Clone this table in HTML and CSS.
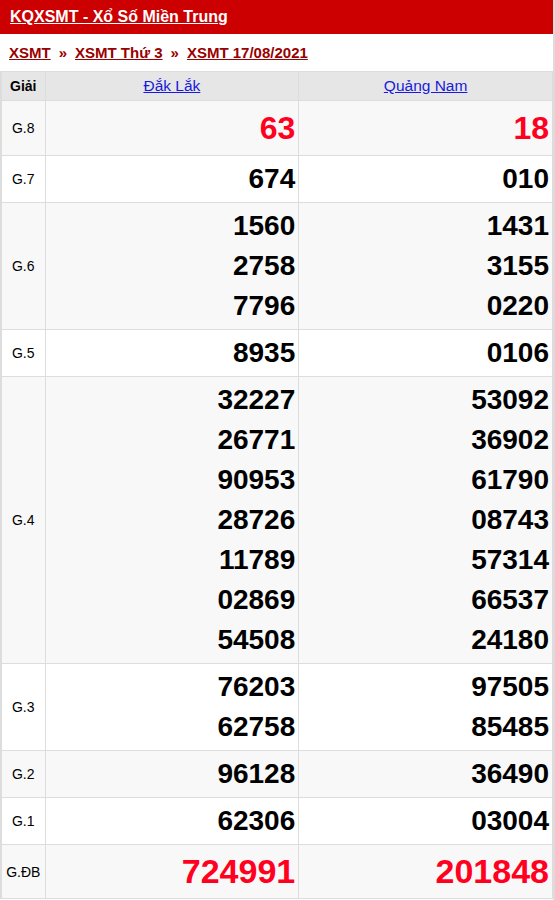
FILE: index.html
```html
<!DOCTYPE html>
<html lang="vi">
<head>
<meta charset="utf-8">
<title>KQXSMT</title>
<link rel="stylesheet" href="styles.css">
</head>
<body>
<div class="page">
  <div class="title-bar"><a href="#" class="title">KQXSMT - Xổ Số Miền Trung</a></div>
  <div class="crumbs">
    <a href="#">XSMT</a><span class="sep">»</span><a href="#">XSMT Thứ 3</a><span class="sep">»</span><a href="#">XSMT 17/08/2021</a>
  </div>
  <table class="kq">
    <colgroup><col class="c-label"><col class="c-prov"><col class="c-prov"></colgroup>
    <thead>
      <tr><th class="lbl">Giải</th><th><a href="#">Đắk Lắk</a></th><th><a href="#">Quảng Nam</a></th></tr>
    </thead>
    <tbody>
      <tr class="alt"><td class="lbl">G.8</td><td class="num big red"><div>63</div></td><td class="num big red"><div>18</div></td></tr>
      <tr><td class="lbl">G.7</td><td class="num"><div>674</div></td><td class="num"><div>010</div></td></tr>
      <tr class="alt"><td class="lbl">G.6</td><td class="num"><div>1560</div><div>2758</div><div>7796</div></td><td class="num"><div>1431</div><div>3155</div><div>0220</div></td></tr>
      <tr><td class="lbl">G.5</td><td class="num"><div>8935</div></td><td class="num"><div>0106</div></td></tr>
      <tr class="alt"><td class="lbl">G.4</td><td class="num"><div>32227</div><div>26771</div><div>90953</div><div>28726</div><div>11789</div><div>02869</div><div>54508</div></td><td class="num"><div>53092</div><div>36902</div><div>61790</div><div>08743</div><div>57314</div><div>66537</div><div>24180</div></td></tr>
      <tr><td class="lbl">G.3</td><td class="num"><div>76203</div><div>62758</div></td><td class="num"><div>97505</div><div>85485</div></td></tr>
      <tr class="alt"><td class="lbl">G.2</td><td class="num"><div>96128</div></td><td class="num"><div>36490</div></td></tr>
      <tr><td class="lbl">G.1</td><td class="num"><div>62306</div></td><td class="num"><div>03004</div></td></tr>
      <tr class="alt"><td class="lbl">G.ĐB</td><td class="num big db red"><div>724991</div></td><td class="num big db red"><div>201848</div></td></tr>
    </tbody>
  </table>
</div>
</body>
</html>
```
FILE: styles.css
```css
html { background: #dcdcdc; }
body {
  margin: 0;
  font-family: "Liberation Sans", Arial, sans-serif;
  color: #000;
}
.page {
  width: 553px;
  min-height: 900px;
  background: #fff;
}
.title-bar {
  background: #cc0000;
  height: 34px;
  line-height: 34px;
  padding: 0 10px;
}
.title {
  color: #fff;
  font-size: 16px;
  font-weight: bold;
  text-decoration: underline;
}
.crumbs {
  padding: 10px 9px;
  line-height: 17px;
  font-size: 15px;
  font-weight: bold;
  color: #990000;
}
.crumbs a { color: #990000; text-decoration: underline; }
.crumbs .sep { margin: 0 8px 0 8px; }
.kq {
  width: 553px;
  border-collapse: collapse;
  table-layout: fixed;
}
.c-label { width: 44px; }
.kq th, .kq td {
  border: 1px solid #dddddd;
}
.kq tr > :first-child { border-left: 2px solid #dddddd; }
.kq thead th {
  background: #e6e6e6;
  height: 28px;
  padding: 0;
  font-size: 15.5px;
  font-weight: normal;
}
.kq thead th.lbl { font-size: 14px; font-weight: bold; }
.kq thead a { color: #1a1adb; text-decoration: underline; }
.kq tr.alt td { background: #f8f8f8; }
.kq td.lbl {
  text-align: center;
  font-size: 14px;
  padding: 0;
}
.kq td.num {
  text-align: right;
  padding: 3px 3px 3px 0;
  font-size: 28px;
  font-weight: bold;
  line-height: 40px;
}
.kq td.big { font-size: 32px; line-height: 48px; }
.kq td.db { font-size: 34px; line-height: 47px; }
.kq td.red { color: #ff0020; }
```
